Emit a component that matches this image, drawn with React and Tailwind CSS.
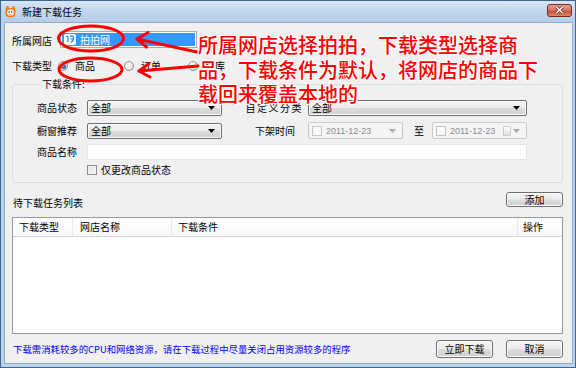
import React from 'react'

const ui = "font-['Noto_Sans_CJK_SC',sans-serif] text-[10px] leading-[12px] text-black"
const btn = 'flex items-center justify-center rounded-[3px] border border-[#707070] bg-[linear-gradient(#f3f3f3_0%,#ebebeb_48%,#dddddd_52%,#cfcfcf_100%)] shadow-[inset_0_0_0_1px_#fcfcfc]'

function Arrow({ className }) {
    return (
        <svg width="7" height="4" viewBox="0 0 7 4" className={className}>
            <path d="M0 0h7L3.5 4z" fill="currentColor" />
        </svg>
    )
}

function Combo({ className, text = '全部' }) {
    return (
        <div className={`${className} h-[16px] flex items-center rounded-[2px] border border-[#707070] bg-[linear-gradient(#f2f2f2_0%,#ebebeb_50%,#dcdcdc_52%,#cfcfcf_100%)] shadow-[inset_0_0_0_1px_#fafafa] pl-[3px] pr-[6px]`}>
            <span className="flex-1">{text}</span>
            <Arrow className="text-black" />
        </div>
    )
}

function DateBox({ className, cal }) {
    return (
        <div className={`${className} h-[17px] flex items-center rounded-[2px] border border-[#c9c9c9] bg-[#f4f4f4] pl-[3px] pr-[6px]`}>
            <span className="w-[10px] h-[10px] border border-[#c4c4c4] bg-[#f8f8f8]" />
            <span className="ml-[4px] flex-1 font-['Liberation_Sans',sans-serif] text-[9px] text-[#8d8d8d]">2011-12-23</span>
            {cal && <span className="w-[8px] h-[10px] mr-[2px] rounded-[1px] border border-[#c9c9c9] bg-[linear-gradient(#ffffff,#dcdcdc)]" />}
            <Arrow className="text-[#a8a8a8]" />
        </div>
    )
}

function Radio({ checked, label, className }) {
    return (
        <div className={`${className} flex items-center`}>
            <span className="w-[10px] h-[10px] rounded-full border border-[#8e8f8f] bg-[radial-gradient(circle_at_35%_35%,#ffffff,#d4d4d4)] flex items-center justify-center">
                {checked && <span className="w-[5px] h-[5px] rounded-full bg-[radial-gradient(circle_at_35%_35%,#6d9ee0,#123d7a)]" />}
            </span>
            <span className="ml-[7px]">{label}</span>
        </div>
    )
}

export default function App() {
    return (
        <div className={`${ui} relative w-[576px] h-[368px] flex flex-col bg-[#bcd3ec] border border-[#40648c]`}>
            {/* title bar */}
            <div className="h-[21px] flex items-center pl-[3px] pr-[3px] bg-[linear-gradient(#d9e6f4,#c3d7ee_45%,#b5cde8)]">
                <svg width="13" height="13" viewBox="0 0 13 13">
                    <path d="M2 2.5 L4 0.5 L5 3 H8 L9 0.5 L11 2.5 L11.5 6 Q12.5 12.5 6.5 12.5 Q0.5 12.5 1.5 6 Z" fill="#ee7c1b" />
                    <circle cx="6.5" cy="7.5" r="3.3" fill="#fff" />
                    <circle cx="5.2" cy="7" r="0.8" fill="#333" />
                    <circle cx="7.8" cy="7" r="0.8" fill="#333" />
                    <path d="M5 9.3 Q6.5 10.5 8 9.3" stroke="#ee7c1b" strokeWidth="0.8" fill="none" />
                </svg>
                <span className="ml-[5px]">新建下载任务</span>
                <div className="flex-1" />
                <div className="w-[25px] h-[13px] mt-[-3px] rounded-[3px] border border-[#7a2a1f] bg-[linear-gradient(#e8a595,#d2705d_50%,#c04a34_52%,#d98a6f)] flex items-center justify-center">
                    <svg width="9" height="8" viewBox="0 0 9 8">
                        <path d="M1.5 1 L7.5 7 M7.5 1 L1.5 7" stroke="#5a2018" strokeWidth="3" />
                        <path d="M1.5 1 L7.5 7 M7.5 1 L1.5 7" stroke="#fff" strokeWidth="1.6" />
                    </svg>
                </div>
            </div>

            {/* body */}
            <div className="flex-1 ml-[3px] mr-[2px] mb-[3px] bg-[#f0f0f0] border border-[#8fa9c7] flex flex-col pl-[7px] pr-[9px]">
                <div className="mt-[8px] h-[17px] flex items-center">
                    <span className="w-[48px] pt-[3px]">所属网店</span>
                    <div className="w-[137px] h-[17px] border border-[#abadb3] bg-white p-[1px]">
                        <div className="h-full bg-[#3399ff] flex items-center pl-[2px] text-white">
                            <span className="w-[12px] h-[11px] rounded-[2px] bg-white flex items-center justify-center">
                                <svg width="10" height="9" viewBox="0 0 10 9">
                                    <path d="M1 2 Q2 0.5 3 2 V7 M5 1.5 Q7 0 8.5 2 Q9 5 6 7.5 M5.5 4 H8" stroke="#2a7fd8" strokeWidth="1.2" fill="none" />
                                </svg>
                            </span>
                            <span className="ml-[4px]">拍拍网</span>
                        </div>
                    </div>
                </div>

                <div className="mt-[11px] h-[14px] flex items-center">
                    <span className="w-[46px]">下载类型</span>
                    <Radio className="w-[66px]" checked label="商品" />
                    <Radio className="w-[64px]" label="订单" />
                    <Radio className="w-[60px]" label="仓库" />
                </div>

                <fieldset className="mt-[3px] border border-[#d5dfe5] rounded-[3px] pt-[8px] pb-[6px] pl-[24px] pr-[35px]">
                    <legend className="ml-[3px] px-[2px] leading-[16px]">下载条件:</legend>
                    <div className="h-[16px] flex items-center">
                        <span className="w-[50px]">商品状态</span>
                        <Combo className="w-[135px]" />
                        <span className="w-[81px] text-right tracking-[1.5px]">自定义分类</span>
                        <Combo className="ml-[5px] flex-1" />
                    </div>
                    <div className="mt-[6px] h-[17px] flex items-center">
                        <span className="w-[50px]">橱窗推荐</span>
                        <Combo className="w-[135px]" />
                        <span className="w-[73px] text-right">下架时间</span>
                        <DateBox className="ml-[13px] w-[95px]" />
                        <span className="w-[29px] pl-[11px]">至</span>
                        <DateBox className="flex-1" cal />
                    </div>
                    <div className="mt-[5px] h-[16px] flex items-center">
                        <span className="w-[50px]">商品名称</span>
                        <div className="flex-1 h-[16px] bg-white border border-[#e1e6eb]" />
                    </div>
                    <div className="mt-[4px] h-[12px] flex items-center pl-[50px]">
                        <span className="w-[10px] h-[10px] border border-[#8f8f8f] bg-[linear-gradient(135deg,#dcdcdc,#fbfbfb)] shadow-[inset_0_0_0_1px_#f4f4f4]" />
                        <span className="ml-[4px]">仅更改商品状态</span>
                    </div>
                </fieldset>

                <div className="mt-[9px] h-[15px] flex items-end justify-between">
                    <span className="mb-[-2px] ml-[1px]">待下载任务列表</span>
                    <div className={`${btn} w-[57px] h-[15px]`}>添加</div>
                </div>

                <div className="mt-[10px] h-[117px] border border-[#9a9a9a] bg-white flex flex-col">
                    <div className="h-[19px] flex border-b border-[#d5d5d5] bg-[linear-gradient(#ffffff,#f7f8f9)]">
                        <div className="w-[60px] pl-[6px] flex items-center border-r border-[#e5e8ec]">下载类型</div>
                        <div className="w-[99px] pl-[7px] flex items-center border-r border-[#e5e8ec]">网店名称</div>
                        <div className="flex-1 pl-[6px] flex items-center border-r border-[#e5e8ec]">下载条件</div>
                        <div className="w-[44px] pl-[5px] flex items-center">操作</div>
                    </div>
                </div>

                <div className="mt-[6px] h-[18px] flex items-center">
                    <span className="flex-1 ml-[1px] text-[9.4px] text-[#0000ff]">下载需消耗较多的CPU和网络资源，请在下载过程中尽量关闭占用资源较多的程序</span>
                    <div className={`${btn} w-[57px] h-[18px]`}>立即下载</div>
                    <div className={`${btn} ml-[13px] w-[57px] h-[18px]`}>取消</div>
                </div>
            </div>

            {/* annotation overlay */}
            <svg className="absolute left-0 top-0 pointer-events-none" width="576" height="368" viewBox="0 0 576 368">
                <g fill="none" stroke="#ff0000" strokeWidth="3" strokeLinecap="round" strokeLinejoin="round">
                    <ellipse cx="90" cy="37.5" rx="32.5" ry="12.5" />
                    <ellipse cx="89.5" cy="68.5" rx="31.5" ry="11.5" />
                    <path d="M196 51 L136 38" />
                    <path d="M147 31.5 L136 38 L145.5 46" />
                    <path d="M197 65 L138 70" />
                    <path d="M148 62.5 L138 70 L149 76" />
                </g>
            </svg>
            <div className="absolute left-[197px] top-[32px] font-['Noto_Sans_CJK_SC',sans-serif] font-medium text-[20px] leading-[24.5px] text-[#ff0000] [text-shadow:1px_0_0_#fff,-1px_0_0_#fff,0_1px_0_#fff,0_-1px_0_#fff,1px_1px_0_#fff,-1px_-1px_0_#fff,1px_-1px_0_#fff,-1px_1px_0_#fff]">
                <div>所属网店选择拍拍，下载类型选择商</div>
                <div>品，下载条件为默认，将网店的商品下</div>
                <div>载回来覆盖本地的</div>
            </div>
        </div>
    )
}
